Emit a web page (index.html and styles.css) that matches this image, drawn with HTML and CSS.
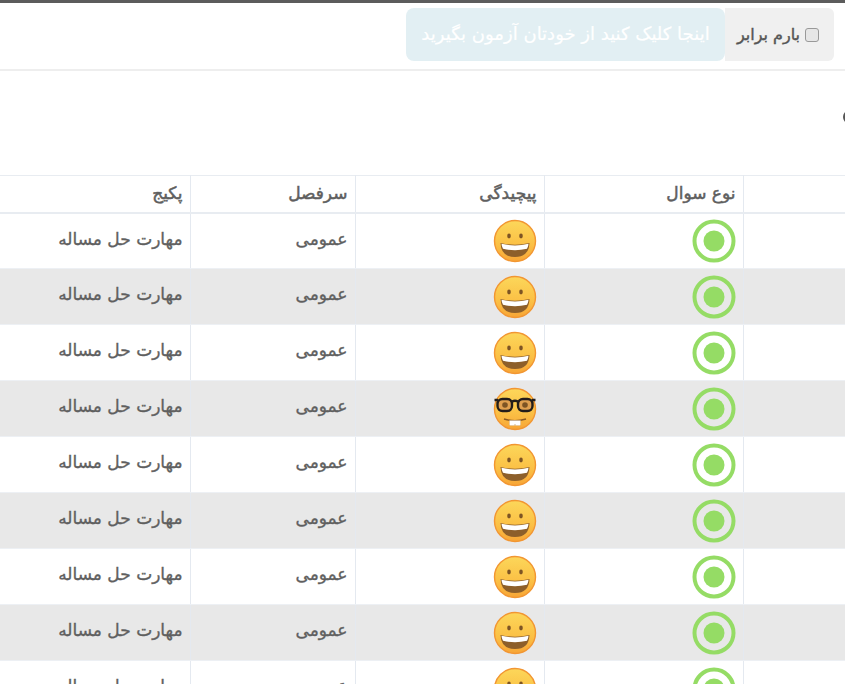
FILE: index.html
```html
<!DOCTYPE html>
<html lang="fa" dir="rtl">
<head>
<meta charset="utf-8">
<title>آزمون</title>
<link rel="stylesheet" href="styles.css">
</head>
<body>
<svg class="defs" width="0" height="0" aria-hidden="true">
  <defs>
    <linearGradient id="face" x1="0" y1="0" x2="0" y2="1">
      <stop offset="0" stop-color="#fcd75a"/>
      <stop offset="0.6" stop-color="#fbc045"/>
      <stop offset="1" stop-color="#f7a536"/>
    </linearGradient>
    <symbol id="smile" viewBox="0 0 44 44">
      <circle cx="22" cy="22" r="20.500" fill="url(#face)" stroke="#f29632" stroke-width="1.400"/>
      <ellipse cx="16" cy="17" rx="1.800" ry="2.400" fill="#7d5424"/>
      <ellipse cx="28" cy="17" rx="1.800" ry="2.400" fill="#7d5424"/>
      <path d="M7.500 24 Q22 27.500 36.500 24 Q36 38 22 38 Q8 38 7.500 24Z" fill="#8d5f2a"/>
      <path d="M8.500 24.800 Q22 28 35.500 24.800 Q35.500 27 34 29.800 Q22 32.500 10 29.800 Q8.500 27 8.500 24.800Z" fill="#fff"/>
    </symbol>
    <symbol id="nerd" viewBox="0 0 44 44">
      <circle cx="22" cy="22" r="20.500" fill="url(#face)" stroke="#f29632" stroke-width="1.400"/>
      <rect x="4.500" y="12" width="14.500" height="12" rx="5" fill="#e0a050" stroke="#231d1a" stroke-width="2.400"/>
      <rect x="25" y="12" width="14.500" height="12" rx="5" fill="#e0a050" stroke="#231d1a" stroke-width="2.400"/>
      <circle cx="12" cy="18" r="2.800" fill="#7d5424"/>
      <circle cx="32" cy="18" r="2.800" fill="#7d5424"/>
      <path d="M1.500 13 L5 13 M19 14.500 Q22 13 25 14.500 M39 13 L42.500 13" fill="none" stroke="#231d1a" stroke-width="2.400"/>
      <path d="M11 32 Q22 35.500 33 32" fill="none" stroke="#8a5a22" stroke-width="1.400"/>
      <path d="M16.500 33.500 H27.500 V37.500 Q27.500 38.500 26.500 38.500 H23 Q22 38.500 22 37 Q22 38.500 21 38.500 H17.500 Q16.500 38.500 16.500 37.500Z" fill="#fff" stroke="#c9b79a" stroke-width="0.400"/>
    </symbol>
    <symbol id="radio" viewBox="0 0 44 44">
      <circle cx="22" cy="22" r="19.500" fill="none" stroke="#95dc65" stroke-width="4"/>
      <circle cx="22" cy="22" r="10.500" fill="#95dc65"/>
    </symbol>
  </defs>
</svg>
<div class="topline"></div>
<header class="toolbar">
  <label class="equal"><input type="checkbox" class="check"><span>بارم برابر</span></label>
  <div class="selftest">اینجا کلیک کنید از خودتان آزمون بگیرید</div>
</header>
<div class="gap"><span class="clipped"></span></div>
<table class="grid">
  <colgroup><col class="c1"><col class="c2"><col class="c3"><col class="c4"><col class="c5"></colgroup>
  <thead>
    <tr><th></th><th>نوع سوال</th><th>پیچیدگی</th><th>سرفصل</th><th>پکیج</th></tr>
  </thead>
  <tbody>
    <tr class="first"><td></td><td><svg class="ico"><use href="#radio"/></svg></td><td><svg class="ico"><use href="#smile"/></svg></td><td>عمومی</td><td>مهارت حل مساله</td></tr>
    <tr class="alt"><td></td><td><svg class="ico"><use href="#radio"/></svg></td><td><svg class="ico"><use href="#smile"/></svg></td><td>عمومی</td><td>مهارت حل مساله</td></tr>
    <tr><td></td><td><svg class="ico"><use href="#radio"/></svg></td><td><svg class="ico"><use href="#smile"/></svg></td><td>عمومی</td><td>مهارت حل مساله</td></tr>
    <tr class="alt"><td></td><td><svg class="ico"><use href="#radio"/></svg></td><td><svg class="ico"><use href="#nerd"/></svg></td><td>عمومی</td><td>مهارت حل مساله</td></tr>
    <tr><td></td><td><svg class="ico"><use href="#radio"/></svg></td><td><svg class="ico"><use href="#smile"/></svg></td><td>عمومی</td><td>مهارت حل مساله</td></tr>
    <tr class="alt"><td></td><td><svg class="ico"><use href="#radio"/></svg></td><td><svg class="ico"><use href="#smile"/></svg></td><td>عمومی</td><td>مهارت حل مساله</td></tr>
    <tr><td></td><td><svg class="ico"><use href="#radio"/></svg></td><td><svg class="ico"><use href="#smile"/></svg></td><td>عمومی</td><td>مهارت حل مساله</td></tr>
    <tr class="alt"><td></td><td><svg class="ico"><use href="#radio"/></svg></td><td><svg class="ico"><use href="#smile"/></svg></td><td>عمومی</td><td>مهارت حل مساله</td></tr>
    <tr><td></td><td><svg class="ico"><use href="#radio"/></svg></td><td><svg class="ico"><use href="#smile"/></svg></td><td>عمومی</td><td>مهارت حل مساله</td></tr>
  </tbody>
</table>
</body>
</html>
```
FILE: styles.css
```css
* { box-sizing: border-box; }
html, body { margin: 0; height: 684px; overflow: hidden; background: #fff; }
body { font-family: "DejaVu Sans", "Noto Sans", sans-serif; color: #5f5f5f; font-size: 14px; }
.defs { position: absolute; }
.topline { height: 3px; background: #5c5c5c; }
.toolbar { display: flex; align-items: flex-start; height: 68px; padding: 5px 11px 0 0; border-bottom: 2px solid #eeeeee; }
.equal { display: flex; align-items: center; gap: 5px; flex: none; width: 109px; height: 53px; padding: 0 15px 0 0; background: #f0f0f0; border-radius: 0 6px 6px 0; font-size: 16px; color: #555; white-space: nowrap; -webkit-text-stroke: 0.4px #555; }
.check { appearance: none; margin: 0; width: 14px; height: 14px; flex: none; background: #e6e6e6; border: 1px solid #999; border-radius: 3px; }
.selftest { display: flex; align-items: center; justify-content: center; flex: none; width: 319px; height: 53px; padding-bottom: 3px; background: #e2eff3; border-radius: 8px; color: #fff; font-size: 18px; white-space: nowrap; -webkit-text-stroke: 0.2px #fff; }
.gap { height: 104px; display: flex; align-items: flex-start; padding-top: 40px; }
.clipped { width: 10px; height: 12px; margin-right: -8px; border-radius: 50%; background: #555; }
.grid { width: 845px; table-layout: fixed; border-collapse: collapse; }
.c1 { width: 102px; } .c2 { width: 199px; } .c3 { width: 189px; } .c4 { width: 165px; } .c5 { width: 190px; }
th, td { text-align: right; vertical-align: top; padding: 5px 7px; border-left: 1px solid #e4e9f0; }
th:last-child, td:last-child { border-left: 0; }
th { height: 37px; font-size: 17px; line-height: 24px; font-weight: normal; -webkit-text-stroke: 0.5px #5f5f5f; border-top: 1px solid #e8ecf1; border-bottom: 2px solid #e8ecf1; }
td { height: 56px; font-size: 17px; line-height: 24px; font-weight: normal; -webkit-text-stroke: 0.35px #5f5f5f; padding-top: 13px; border-bottom: 1px solid #edf0f4; }
td:nth-child(2), td:nth-child(3) { padding-top: 6px; }
tr.first td:nth-child(2), tr.first td:nth-child(3) { padding-top: 5px; }
tr.alt td { background: #e8e8e8; }
.ico { display: block; width: 44px; height: 44px; }
```
